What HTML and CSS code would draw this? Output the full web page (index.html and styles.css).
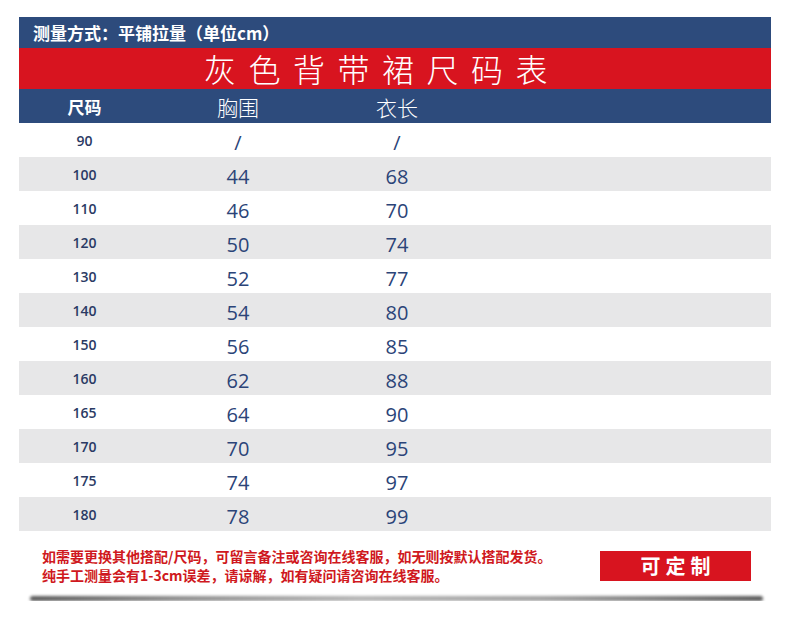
FILE: index.html
```html
<!DOCTYPE html>
<html lang="zh-CN">
<head>
<meta charset="utf-8">
<title>灰色背带裙尺码表</title>
<link rel="stylesheet" href="styles.css">
</head>
<body>
<div class="sheet">
  <div class="method">测量方式：平铺拉量（单位cm）</div>
  <div class="title">灰色背带裙尺码表</div>
  <div class="head row">
    <div class="c1">尺码</div>
    <div class="c2">胸围</div>
    <div class="c3">衣长</div>
  </div>
  <div class="row"><div class="c1 size">90</div><div class="c2 val">/</div><div class="c3 val">/</div></div>
  <div class="row alt"><div class="c1 size">100</div><div class="c2 val">44</div><div class="c3 val">68</div></div>
  <div class="row"><div class="c1 size">110</div><div class="c2 val">46</div><div class="c3 val">70</div></div>
  <div class="row alt"><div class="c1 size">120</div><div class="c2 val">50</div><div class="c3 val">74</div></div>
  <div class="row"><div class="c1 size">130</div><div class="c2 val">52</div><div class="c3 val">77</div></div>
  <div class="row alt"><div class="c1 size">140</div><div class="c2 val">54</div><div class="c3 val">80</div></div>
  <div class="row"><div class="c1 size">150</div><div class="c2 val">56</div><div class="c3 val">85</div></div>
  <div class="row alt"><div class="c1 size">160</div><div class="c2 val">62</div><div class="c3 val">88</div></div>
  <div class="row"><div class="c1 size">165</div><div class="c2 val">64</div><div class="c3 val">90</div></div>
  <div class="row alt"><div class="c1 size">170</div><div class="c2 val">70</div><div class="c3 val">95</div></div>
  <div class="row"><div class="c1 size">175</div><div class="c2 val">74</div><div class="c3 val">97</div></div>
  <div class="row alt"><div class="c1 size">180</div><div class="c2 val">78</div><div class="c3 val">99</div></div>
  <div class="footer">
    <div class="notes">
      <p>如需要更换其他搭配/尺码，可留言备注或咨询在线客服，如无则按默认搭配发货。</p>
      <p>纯手工测量会有1-3cm误差，请谅解，如有疑问请咨询在线客服。</p>
    </div>
    <div class="custom">可定制</div>
  </div>
  <div class="shadow"></div>
</div>
</body>
</html>
```

FILE: styles.css
```css
html, body {
  margin: 0;
  padding: 0;
  background: #ffffff;
}

body {
  font-family: "Noto Sans CJK SC", "Noto Sans", sans-serif;
}

.sheet {
  width: 752px;
  margin: 17px 0 0 19px;
}

.method {
  background: #2d4b7c;
  color: #ffffff;
  height: 31px;
  line-height: 31px;
  padding-left: 14px;
  font-size: 17px;
  font-weight: 700;
  box-sizing: border-box;
}

.title {
  background: #d8141f;
  color: #ffffff;
  height: 41px;
  line-height: 41px;
  font-size: 32px;
  font-weight: 300;
  letter-spacing: 12.5px;
  text-align: center;
  padding-right: 26px;
}

.row {
  display: grid;
  grid-template-columns: 131px 176px 142px 1fr;
  height: 34px;
  align-items: center;
  text-align: center;
}

.row.alt {
  background: #e7e7e8;
}

.head {
  background: #2d4b7c;
  color: #ffffff;
}

.head .c1 {
  font-size: 17px;
  font-weight: 700;
}

.head .c2,
.head .c3 {
  font-size: 21px;
  font-weight: 300;
  padding-top: 2px;
}

.size {
  font-family: "Open Sans", "Liberation Sans", sans-serif;
  font-size: 14px;
  font-weight: 600;
  color: #2a3a64;
  padding-top: 1px;
}

.val {
  font-family: "Open Sans", "Liberation Sans", sans-serif;
  font-size: 20px;
  color: #2b4478;
  padding-top: 5px;
}

.footer {
  display: flex;
  align-items: center;
  padding: 16px 20px 8px 23px;
}

.notes p {
  margin: 0;
  color: #cf1820;
  font-size: 14px;
  font-weight: 700;
  line-height: 19px;
  white-space: nowrap;
}

.custom {
  margin-left: auto;
  width: 151px;
  height: 30px;
  line-height: 30px;
  background: #d8141f;
  color: #ffffff;
  text-align: center;
  font-size: 20px;
  font-weight: 700;
  letter-spacing: 5px;
  text-indent: 5px;
}

.shadow {
  height: 5px;
  margin: 3px 8px 0 11px;
  border-radius: 3px;
  background: linear-gradient(to right, #5a5a5a, #8c8c8c 20%, #b4b4b4 45%, #a0a0a0 70%, #5a5a5a);
  filter: blur(1.5px);
}
```
